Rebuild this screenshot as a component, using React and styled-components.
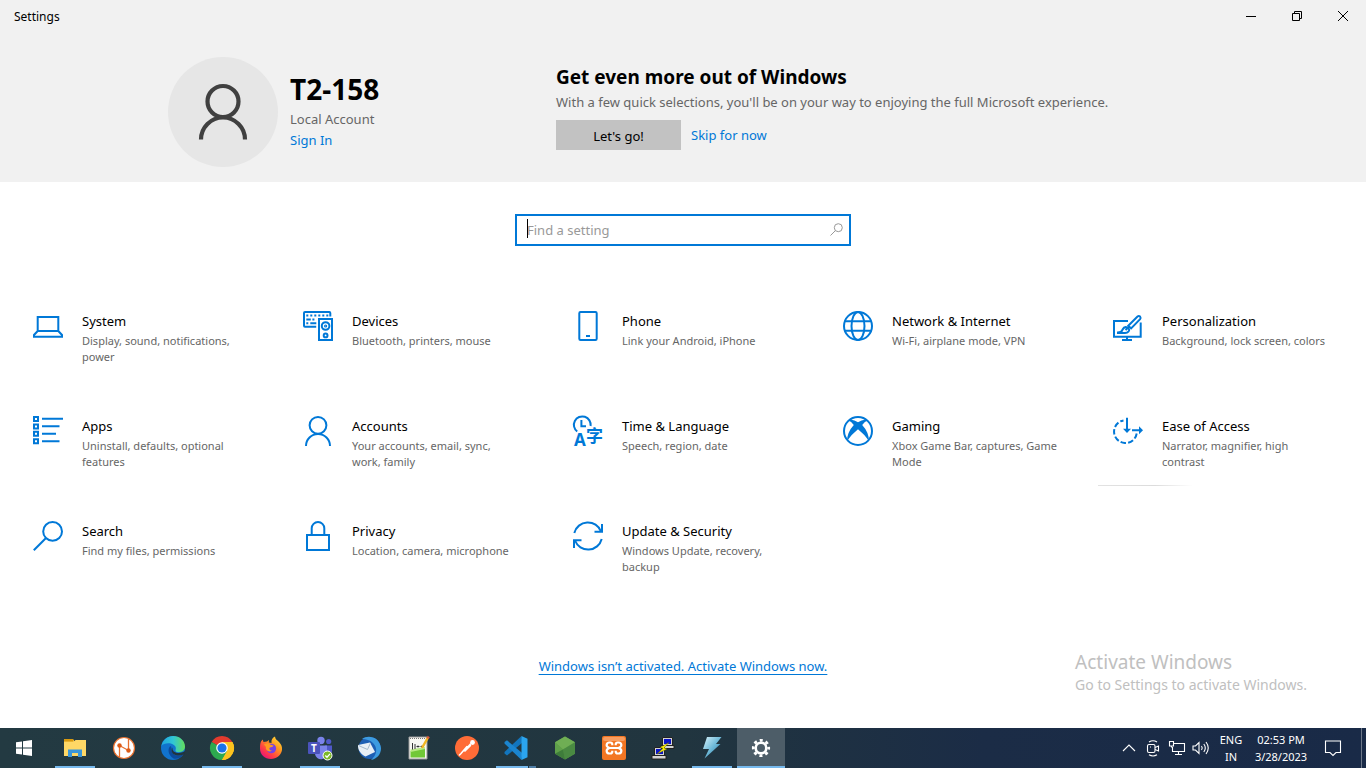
import React from "react";
import styled, { createGlobalStyle, css } from "styled-components";

const BLUE = "#0078d7";

const GlobalStyle = createGlobalStyle`
  * { box-sizing: border-box; }
  body { margin: 0; background: #fff; color: #000; font: 13px/20px "Noto Sans", "Open Sans", sans-serif; }
  button { font: inherit; color: inherit; border: 0; padding: 0; background: none; }
  a { color: ${BLUE}; text-decoration: none; }
  h1, h2, h3, p { margin: 0; }
  svg { display: block; flex: none; overflow: visible; }
`;

const Desktop = styled.div`
  min-height: 100vh;
  display: flex;
  flex-direction: column;
`;

const Header = styled.header`
  background: #f1f1f1;
  padding-bottom: 15px;
`;

const TitleBar = styled.div`
  display: flex;
  align-items: center;
  justify-content: space-between;
  height: 32px;
  padding-left: 14px;
  font-size: 12px;
`;

const WindowTitle = styled.span`
  padding-top: 2px;
`;

const WindowControls = styled.div`
  display: flex;
`;

const WindowButton = styled.button`
  width: 46px;
  height: 32px;
  display: grid;
  place-items: center;
`;

const Banner = styled.div`
  display: grid;
  grid-template-columns: 388px 1fr;
  width: 100%;
  max-width: 1030px;
  margin: 0 auto;
  padding-top: 25px;
`;

const Profile = styled.section`
  display: flex;
  gap: 12px;
`;

const Avatar = styled.div`
  width: 110px;
  height: 110px;
  border-radius: 50%;
  background: #e6e6e6;
  display: grid;
  place-items: center;
`;

const ProfileText = styled.div`
  display: flex;
  flex-direction: column;
  padding-top: 16px;
  line-height: 21px;
`;

const UserName = styled.h1`
  font-size: 28px;
  line-height: 32px;
  font-weight: 700;
  margin-bottom: 4px;
`;

const Muted = styled.p`
  color: #666;
`;

const Promo = styled.section`
  padding-top: 6px;
`;

const PromoTitle = styled.h2`
  font-size: 19px;
  line-height: 28px;
  font-weight: 700;
  margin-bottom: 1px;
`;

const PromoActions = styled.div`
  display: flex;
  align-items: center;
  gap: 10px;
  margin-top: 8px;
`;

const PrimaryButton = styled.button`
  width: 125px;
  height: 30px;
  padding-top: 1px;
  background: #c2c2c2;
`;

const Main = styled.main`
  flex: 1;
  position: relative;
  padding: 32px 18px 0;
`;

const SearchBox = styled.label`
  position: relative;
  display: flex;
  align-items: center;
  width: 336px;
  height: 32px;
  margin: 0 auto;
  padding: 0 6px 1px 10px;
  border: 2px solid ${BLUE};

  &::before {
    content: "";
    position: absolute;
    left: 10px;
    top: 3px;
    width: 1px;
    height: 19px;
    background: #000;
  }
`;

const SearchInput = styled.input`
  flex: 1;
  min-width: 0;
  border: 0;
  outline: 0;
  padding: 0;
  background: none;
  font: inherit;
  &::placeholder { color: #999; opacity: 1; }
`;

const Grid = styled.nav`
  display: grid;
  grid-template-columns: repeat(5, 1fr);
  gap: 19px 20px;
  margin-top: 49px;
`;

const Tile = styled.a`
  display: flex;
  gap: 19px;
  min-height: 86px;
  padding: 16px 18px 0 15px;
  color: #000;
  ${(p) => p.$lit && css`
    background: linear-gradient(90deg, #e2e2e2, #dcdcdc 60%, transparent) left bottom / 95px 1px no-repeat;
  `}
`;

const TileTitle = styled.h3`
  font-size: 13px;
  line-height: 20px;
  font-weight: 400;
  margin-bottom: 2px;
`;

const TileText = styled.p`
  font-size: 11px;
  line-height: 16px;
  color: #666;
`;

const ActivateRow = styled.div`
  display: flex;
  justify-content: center;
  padding: 65px 0 50px;
`;

const ActivateLink = styled.a`
  text-decoration: underline;
  text-underline-offset: 3px;
`;

const Watermark = styled.div`
  position: absolute;
  right: 59px;
  bottom: 32px;
  color: #c0c0c0;
  font-size: 14px;
  line-height: 22px;
  pointer-events: none;
`;

const WatermarkTitle = styled.div`
  font-size: 19px;
  line-height: 24px;
`;

const Taskbar = styled.footer`
  display: flex;
  justify-content: space-between;
  height: 40px;
  background: linear-gradient(90deg, #233a42, #21353f 50%, #1b2c46 72%, #192a47);
  color: #fff;
`;

const TaskApps = styled.div`
  display: flex;
  gap: 1px;
`;

const TaskButton = styled.button`
  position: relative;
  width: 48px;
  height: 40px;
  display: grid;
  place-items: center;
  ${(p) => p.$start && css`margin-right: 2px;`}
  ${(p) => p.$active && css`background: #4d5d68;`}
  ${(p) => p.$running && css`
    &::after {
      content: "";
      position: absolute;
      left: ${p.$active ? 0 : 4}px;
      right: ${p.$active ? 0 : 4}px;
      bottom: 0;
      height: 2px;
      background: ${p.$stacked ? "linear-gradient(90deg, #76b9ed 32px, #21353f 32px 33px, #4f7ea6 33px)" : "#76b9ed"};
    }
  `}
`;

const Tray = styled.div`
  display: flex;
  align-items: center;
  font-size: 11px;
  line-height: 17px;
  text-align: center;
`;

const TrayButton = styled.button`
  width: 24px;
  height: 40px;
  display: grid;
  place-items: center;
`;

const Language = styled.button`
  width: 36px;
`;

const Clock = styled.button`
  width: 64px;
`;

const Notifications = styled(TrayButton)`
  width: 40px;
`;

const ShowDesktop = styled.button`
  width: 5px;
  height: 40px;
  margin-left: 8px;
  border-left: 1px solid #6d7889;
`;

const Line = ({ children, w = 2, size = 30 }) => (
  <svg width={size} height={size} viewBox="0 0 30 30" fill="none" stroke={BLUE} strokeWidth={w} aria-hidden="true">
    {children}
  </svg>
);

const icons = {
  system: (
    <Line>
      <path d="M4.700 20V6h20.600v14zM4.700 20 1 24v1.700h28V24l-3.700-4" />
    </Line>
  ),
  devices: (
    <Line>
      <path d="M27.3 5.5V2q0-1-1-1H2Q1 1 1 2v12.700q0 1 1 1h11.200" />
      <path d="M3.300 4.400h2m2 0h2m2 0h2m2 0h2m2 0h2m2 0h2M3.300 8.400h4.500m1.600 0h2M3.300 12.300h2m2 0h6" />
      <path d="M16 8h13v21H16z" />
      <circle cx="22.600" cy="15" r="3.800" />
      <circle cx="22.600" cy="15" r=".6" />
      <circle cx="22.600" cy="24.400" r="1.900" />
    </Line>
  ),
  phone: (
    <Line>
      <rect x="6.300" y="1" width="17.400" height="28" rx="1.200" />
      <path d="M13 25h4" />
    </Line>
  ),
  globe: (
    <Line>
      <circle cx="15" cy="15" r="14" />
      <ellipse cx="15" cy="15" rx="6.500" ry="14" />
      <path d="M2 10.200h26M2 19.800h26" />
    </Line>
  ),
  personalization: (
    <Line>
      <path d="M15 10H1v15.800h26.700V11.500M14 26v3M9 29h10" />
      <path d="m15.300 14.800 9.200-9.300q1.300-1 2.600 0 1 1.300 0 2.600l-9 9.300z" />
      <path d="M4 21.500q4.600.3 5.600-3 1.600-3.400 4.800-2 3 1.700 1 4.200-1 1.300-3.400 1.300H4" />
      <path d="m12.500 19 4-3.500" />
    </Line>
  ),
  apps: (
    <Line>
      <path d="M1 1h4v4H1zM1 8.400h4v4H1zM1 15.800h4v4H1zM1 23.200h4v4H1z" />
      <path d="M9 2.800h21M9 10.300h17.500M9 17.800h14M9 25.300h17.500" />
    </Line>
  ),
  accounts: (
    <Line>
      <circle cx="15" cy="9.300" r="8.400" />
      <path d="M3 30a12 12 0 0 1 24 0" />
    </Line>
  ),
  language: (
    <Line>
      <path d="M4.200 15.500A8.400 8.400 0 1 1 17.600 10" />
      <path d="M8.400 4v6.200H13" />
      <text x="1" y="30" fontFamily="Noto Sans, sans-serif" fontWeight="700" fontSize="17" fill={BLUE} stroke="none">A</text>
      <text x="13" y="26" fontFamily="Noto Sans CJK SC, sans-serif" fontWeight="700" fontSize="17" fill={BLUE} stroke="none">字</text>
    </Line>
  ),
  xbox: (
    <Line>
      <circle cx="15" cy="15" r="14" />
      <path
        fill={BLUE}
        stroke="none"
        d="M5.300 4.600Q9 2.200 15 6.300 21 2.200 24.700 4.600 21.800 5.600 19.200 8.900 25.800 16 26 25 21 18 15 13.300 9 18 4 25 4.200 16 10.800 8.900 8.200 5.600 5.300 4.600z"
      />
    </Line>
  ),
  ease: (
    <Line>
      <path strokeDasharray="5.500 2.200" d="M23.700 17.500A11.400 11.400 0 1 1 10.500 4.400" />
      <path d="M14 1.700V14M19 14.200h8" />
      <path fill={BLUE} stroke="none" d="M10 12.800h8L14 17zM26 10.200v8l4-4z" />
    </Line>
  ),
  search: (
    <Line>
      <circle cx="19.600" cy="10.400" r="9.400" />
      <path d="M13 17 .8 29.200" />
    </Line>
  ),
  privacy: (
    <Line>
      <path d="M4 14h22v15H4zM8.700 14V7.300a6.300 6.300 0 0 1 12.600 0V14" />
    </Line>
  ),
  update: (
    <Line>
      <path d="M1.300 12A14 14 0 0 1 28 10.500M28.700 18A14 14 0 0 1 2 19.500" />
      <path d="M29 3v7.800h-7.500M1 27v-7.800h7.500" />
    </Line>
  ),
};

const categories = [
  ["system", "System", "Display, sound, notifications, power"],
  ["devices", "Devices", "Bluetooth, printers, mouse"],
  ["phone", "Phone", "Link your Android, iPhone"],
  ["globe", "Network & Internet", "Wi-Fi, airplane mode, VPN"],
  ["personalization", "Personalization", "Background, lock screen, colors"],
  ["apps", "Apps", "Uninstall, defaults, optional features"],
  ["accounts", "Accounts", "Your accounts, email, sync, work, family"],
  ["language", "Time & Language", "Speech, region, date"],
  ["xbox", "Gaming", "Xbox Game Bar, captures, Game Mode"],
  ["ease", "Ease of Access", "Narrator, magnifier, high contrast"],
  ["search", "Search", "Find my files, permissions"],
  ["privacy", "Privacy", "Location, camera, microphone"],
  ["update", "Update & Security", "Windows Update, recovery, backup"],
];

const Art = ({ children }) => (
  <svg width="24" height="24" viewBox="0 0 24 24" aria-hidden="true">{children}</svg>
);

const taskApps = [
  {
    name: "Start",
    start: true,
    art: <path fill="#fff" d="M4 6.300 10 5.400V11.500H4zM11 5.200 20 4v7.500h-9zM4 12.500h6v6.100l-6-.9zM11 12.500h9V20l-9-1.200z" />,
  },
  {
    name: "File Explorer",
    running: true,
    art: (
      <>
        <path fill="#f3bd3a" d="M1 3h9l1.500 2H22v4H1z" />
        <path fill="#ffd866" d="M1 5.500h10L12.500 4H23v16H1z" />
        <path fill="#d99a10" d="M1 3h9v2.500H1z" />
        <path fill="#3b96d8" d="M5 13.500h14V21h-4v-4H9v4H5z" />
      </>
    ),
  },
  {
    name: "Ngrok",
    art: (
      <>
        <circle cx="12" cy="12" r="10.500" fill="#fff" stroke="#e8702e" strokeWidth="1.200" />
        <path d="M7.500 21V9.500L16.500 14.500V3" fill="none" stroke="#e8702e" strokeWidth="1.300" />
        <circle cx="7.500" cy="9.500" r="2.200" fill="#dd5b17" />
        <circle cx="16.500" cy="14.500" r="2.200" fill="#dd5b17" />
      </>
    ),
  },
  {
    name: "Edge",
    art: (
      <>
        <defs>
          <linearGradient id="edgeTop" x1="0" x2="1">
            <stop offset="0" stopColor="#1fa5e0" /><stop offset=".5" stopColor="#31c6d4" /><stop offset="1" stopColor="#64dd5a" />
          </linearGradient>
        </defs>
        <circle cx="12" cy="12" r="12" fill="#1173cd" />
        <path fill="url(#edgeTop)" d="M.4 10C1.500 4 6.500 0 12 0c7 0 12 5 12 10.500 0 4-3 5.700-6 5.700-2.500 0-4-.8-3.500-2 .7-1.500.5-3.500-1-4.800C9.500 6 2.500 7 .4 10z" />
        <path fill="#0c4b9c" d="M9.500 10C6.500 12 6.600 19 12.500 22.500c4 1 8-1 10-4.500-5 3-11.500 1.500-12-4-.1-1.500.3-3-1-4z" />
        <path fill="#21343e" d="M11.500 11.500c-.7 4 4 7 10 4.700l2.500-1v2.300l-1.500 1c-4 2-12 1.200-12-4.500 0-1 .4-1.900 1-2.500z" />
      </>
    ),
  },
  {
    name: "Chrome",
    running: true,
    art: (
      <>
        <path fill="#e33b2e" d="M12 12 1.600 6A12 12 0 0 1 22.400 6z" />
        <path fill="#fcc31e" d="M12 12V6h10.400A12 12 0 0 1 12 24z" />
        <path fill="#2da94f" d="M12 12 1.600 6A12 12 0 0 0 12 24l5.200-9z" />
        <path fill="#fcc31e" d="M17.200 15 12 24A12 12 0 0 0 22.400 6H12z" />
        <circle cx="12" cy="12" r="5.800" fill="#fff" />
        <circle cx="12" cy="12" r="4.600" fill="#1a73e8" />
      </>
    ),
  },
  {
    name: "Firefox",
    art: (
      <>
        <defs>
          <linearGradient id="fox" x1="1" y1="0" x2=".2" y2="1">
            <stop offset="0" stopColor="#fff044" /><stop offset=".4" stopColor="#ff9a1f" /><stop offset=".75" stopColor="#ff3b47" /><stop offset="1" stopColor="#e1107e" />
          </linearGradient>
        </defs>
        <path fill="url(#fox)" d="M2 5.500 3.700 3.500 4.500 6 8 5.500l2-1.500-.2 2.500L12.500 7C12 4 13.500 1.500 16 .5c0 2.500 2.500 4 4 5.500C22.500 8.500 23.300 11 23 14c-1 5.500-5.500 9-11 9C5.500 23 1 18.500 1 12.500 1 10 1 8 2 5.500z" />
        <circle cx="12.300" cy="12.500" r="4.800" fill="#7542e4" />
        <path fill="#ff9a1f" d="M5 8.500c2-1.500 5-1 6.500.3l3 .7c-.3 1.500-2.500 1.500-3.500 2-1.500 1 0 3.500 2 3-3 2.500-7-.5-6-3.500z" />
      </>
    ),
  },
  {
    name: "Teams",
    running: true,
    art: (
      <>
        <circle cx="13" cy="4.500" r="3.700" fill="#7b83eb" />
        <circle cx="20.700" cy="5.500" r="2.600" fill="#5059c9" />
        <path fill="#5059c9" d="M17 9.500h7v6a4 4 0 0 1-7 2z" />
        <path fill="#7b83eb" d="M7 9.500h12v7a6 6 0 0 1-12 1.500z" />
        <rect y="6" width="12" height="12" rx="1" fill="#4b53bc" />
        <text x="6" y="15.500" textAnchor="middle" fontFamily="Noto Sans, sans-serif" fontWeight="700" fontSize="10" fill="#fff">T</text>
        <circle cx="19.500" cy="19.500" r="4.500" fill="#7db928" stroke="#fff" />
        <path d="m17.300 19.500 1.700 1.700 3-3.300" fill="none" stroke="#fff" strokeWidth="1.300" />
      </>
    ),
  },
  {
    name: "Thunderbird",
    art: (
      <>
        <circle cx="12.500" cy="12" r="11" fill="#1d5fb4" />
        <path fill="#3d9be0" d="M5 3C11-2 23 1 24 12c.2 6-4 11-10 12 6-5 7-12 2-17-3-3-7-4-11-4z" />
        <path fill="#e8eff6" d="m1 9 12-2.500 5 9.500-9.500 4.500C4.500 19 .5 14 1 9z" />
        <path d="m1.500 9.500 9 4 3-6.500" stroke="#a5b9cc" fill="none" />
      </>
    ),
  },
  {
    name: "Notepad++",
    art: (
      <>
        <path fill="#f7f7f2" stroke="#999" d="M3 1h18v22H3z" />
        <path fill="#71c837" d="M4.500 15 19 12v9.500H4.500z" />
        <path fill="#b9e986" d="M4.500 13.500 19 11v2L4.500 16z" />
        <path d="M4 2.500h16" stroke="#777" strokeDasharray="1 1" />
        <path d="M6.500 7v6.500M9 8v5M10.500 10.500h3M12 9.500v2M14.500 10.500h3M16 9.500v2" stroke="#333" />
        <path d="M16 12 22 1.500" stroke="#f0b622" strokeWidth="2.500" />
        <path d="m21.500 2.500 1.200-2" stroke="#d4593c" strokeWidth="2.500" />
      </>
    ),
  },
  {
    name: "Postman",
    art: (
      <>
        <circle cx="12" cy="12" r="12" fill="#ff6c37" />
        <circle cx="17.500" cy="6.500" r="2.400" fill="#fff" />
        <path d="m15.500 8-4.500 5M12 10.500 6 17.500l-1.500 1.500M15.500 9.500 10 15" stroke="#fff" strokeWidth="1.600" strokeLinecap="round" />
      </>
    ),
  },
  {
    name: "Visual Studio Code",
    running: true,
    stacked: true,
    art: (
      <>
        <path fill="#1275bd" d="m17.500 0 1 6.500L3 19.500l-2.500-2V16z" />
        <path fill="#1b85cf" d="M.5 7.500V6L3 4.300l15.500 13-1 6.700z" />
        <path fill="#2ba4ee" d="m17.500 0 6 2.700v18.500l-6 2.800z" />
      </>
    ),
  },
  {
    name: "Node.js",
    art: (
      <>
        <path fill="#5a9a46" d="m12 .5 10 5.800v11.500l-10 5.700-10-5.700V6.300z" />
        <path fill="#6fae54" d="m12 .5 10 5.800L10 13.500 2 6.300z" />
        <path fill="#4a8a42" d="M22 6.300 10 13.500l2 10 10-5.700z" />
        <path fill="#5fa04a" d="m2 6.300 8 7.200-8 4.300z" />
        <path fill="#3f7d3b" d="m2 17.800 8-4.300 2 10z" />
      </>
    ),
  },
  {
    name: "XAMPP",
    art: (
      <>
        <rect width="24" height="24" rx="2" fill="#f37623" />
        <rect x="1" y="1" width="22" height="4" rx="2" fill="#f89d60" />
        <path d="M10.300 9.200V8.500a2 2 0 0 0-2-2H7.200a2.500 2.500 0 0 0-1.200 4.700l1.500.8L6 12.800a2.500 2.500 0 0 0 1.200 4.700h1.100a2 2 0 0 0 2-2v-.7M13.700 9.200V8.500a2 2 0 0 1 2-2h1.100a2.500 2.500 0 0 1 1.200 4.700l-1.500.8 1.500.8a2.500 2.500 0 0 1-1.200 4.700h-1.100a2 2 0 0 1-2-2v-.7M7.500 12h9" fill="none" stroke="#fff" strokeWidth="2.200" />
      </>
    ),
  },
  {
    name: "PuTTY",
    art: (
      <>
        <path fill="#d3d3d3" stroke="#222" d="M11.500 1.500h10v8h-10zM10 9.500h13v3H10zM3.500 11.500h10v8h-10zM1 19.500h14v3.500H1z" />
        <path fill="#0a14c8" d="M13 3h7v5h-7zM5 13h7v5H5z" />
        <path fill="#fff200" stroke="#5a5a00" strokeWidth=".4" d="M18 6.500 9 11.500l3 .8L6 18l10-5-3-1z" />
      </>
    ),
  },
  {
    name: "Thunder Client",
    running: true,
    art: (
      <>
        <defs>
          <linearGradient id="bolt" x1="0" y1="0" x2="1" y2="1">
            <stop offset="0" stopColor="#d7f2fb" /><stop offset=".5" stopColor="#6db9d8" /><stop offset="1" stopColor="#226d99" />
          </linearGradient>
        </defs>
        <path fill="url(#bolt)" d="M7 1h14.500l-5.500 7h4.500L4.500 22.500 9 13H3z" />
      </>
    ),
  },
  {
    name: "Settings",
    running: true,
    active: true,
    art: (
      <>
        <circle cx="12" cy="12" r="5.300" fill="none" stroke="#fff" strokeWidth="2.600" />
        <circle cx="12" cy="12" r="7.700" fill="none" stroke="#fff" strokeWidth="2.800" strokeDasharray="3.024 3.024" strokeDashoffset="1.512" />
      </>
    ),
  },
];

const TrayIcon = ({ children, w = 18 }) => (
  <svg width={w} height={w} viewBox="0 0 18 18" fill="none" stroke="#fff" strokeWidth="1.100" aria-hidden="true">{children}</svg>
);

export default function App() {
  return (
    <Desktop>
      <GlobalStyle />
      <Header>
        <TitleBar>
          <WindowTitle>Settings</WindowTitle>
          <WindowControls>
            <WindowButton aria-label="Minimize">
              <svg width="10" height="10" stroke="#000"><path d="M0 5.500h10" /></svg>
            </WindowButton>
            <WindowButton aria-label="Restore">
              <svg width="10" height="10" fill="none" stroke="#000"><path d="M.5 2.500h7v7h-7zM2.500 2.500v-2h7v7h-2" /></svg>
            </WindowButton>
            <WindowButton aria-label="Close">
              <svg width="10" height="10" stroke="#000"><path d="m0 0 10 10M10 0 0 10" /></svg>
            </WindowButton>
          </WindowControls>
        </TitleBar>
        <Banner>
          <Profile>
            <Avatar>
              <svg width="110" height="110" viewBox="0 0 110 110" fill="none" stroke="#404040" strokeWidth="4.200" aria-hidden="true">
                <circle cx="55" cy="44.500" r="15.500" />
                <path d="M33 82.500a22 22 0 0 1 44 0" />
              </svg>
            </Avatar>
            <ProfileText>
              <UserName>T2-158</UserName>
              <Muted>Local Account</Muted>
              <a href="#signin">Sign In</a>
            </ProfileText>
          </Profile>
          <Promo>
            <PromoTitle>Get even more out of Windows</PromoTitle>
            <Muted>With a few quick selections, you'll be on your way to enjoying the full Microsoft experience.</Muted>
            <PromoActions>
              <PrimaryButton>Let's go!</PrimaryButton>
              <a href="#skip">Skip for now</a>
            </PromoActions>
          </Promo>
        </Banner>
      </Header>

      <Main>
        <SearchBox>
          <SearchInput type="text" placeholder="Find a setting" aria-label="Find a setting" />
          <svg width="13" height="13" fill="none" stroke="#999" aria-hidden="true">
            <circle cx="8.300" cy="4.700" r="4" />
            <path d="M5.500 7.500.5 12.500" />
          </svg>
        </SearchBox>
        <Grid aria-label="Settings categories">
          {categories.map(([id, title, text]) => (
            <Tile key={id} href={`#${id}`} $lit={id === "ease"}>
              {icons[id]}
              <div>
                <TileTitle>{title}</TileTitle>
                <TileText>{text}</TileText>
              </div>
            </Tile>
          ))}
        </Grid>
        <ActivateRow>
          <ActivateLink href="#activate">Windows isn’t activated. Activate Windows now.</ActivateLink>
        </ActivateRow>
        <Watermark>
          <WatermarkTitle>Activate Windows</WatermarkTitle>
          Go to Settings to activate Windows.
        </Watermark>
      </Main>

      <Taskbar>
        <TaskApps>
          {taskApps.map((a) => (
            <TaskButton key={a.name} aria-label={a.name} $start={a.start} $running={a.running} $active={a.active} $stacked={a.stacked}>
              <Art>{a.art}</Art>
            </TaskButton>
          ))}
        </TaskApps>
        <Tray>
          <TrayButton aria-label="Show hidden icons">
            <TrayIcon><path d="m3 12 6-6 6 6" /></TrayIcon>
          </TrayButton>
          <TrayButton aria-label="Meet Now">
            <TrayIcon>
              <rect x="3.500" y="5.500" width="7.500" height="8" rx="1.500" />
              <path d="M11 8.500 14.500 7v5L11 10.500M5 3q4-2.500 8 0M5 15.700q4 2.500 8 0M6 8h1" />
            </TrayIcon>
          </TrayButton>
          <TrayButton aria-label="Network">
            <TrayIcon>
              <path d="M5.500 4.500h11v8h-12V8M1.500 2.500h4V7h-4zM3.500 7v1.500M10.500 12.500v3M7 15.500h7" />
            </TrayIcon>
          </TrayButton>
          <TrayButton aria-label="Volume">
            <TrayIcon>
              <path d="M1 7h2.500L7 3.500v11L3.500 11H1zM9.500 7q1.500 2 0 4M11.800 5q3 4 0 8M14 3q4.500 6 0 12" />
            </TrayIcon>
          </TrayButton>
          <Language>ENG<br />IN</Language>
          <Clock>02:53 PM<br />3/28/2023</Clock>
          <Notifications aria-label="Notifications">
            <TrayIcon><path d="M1.500 2h15v11.500H12L9 16.500l-3-3H1.500z" /></TrayIcon>
          </Notifications>
          <ShowDesktop aria-label="Show desktop" />
        </Tray>
      </Taskbar>
    </Desktop>
  );
}
